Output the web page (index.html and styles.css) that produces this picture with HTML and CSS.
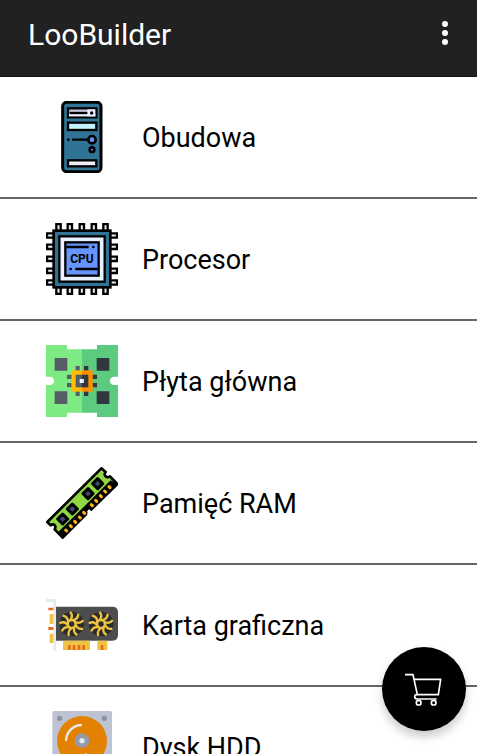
FILE: index.html
```html
<!DOCTYPE html>
<html lang="pl">
<head>
<meta charset="utf-8">
<meta name="viewport" content="width=device-width, initial-scale=1">
<title>LooBuilder</title>
<link rel="stylesheet" href="styles.css">
</head>
<body>
<div class="app">
  <header class="toolbar">
    <h1 class="toolbar-title">LooBuilder</h1>
    <button class="menu-button" type="button" aria-label="Menu">
      <svg class="menu-icon" viewBox="0 0 8 24" aria-hidden="true"><circle cx="4" cy="3" r="3"/><circle cx="4" cy="12" r="3"/><circle cx="4" cy="21" r="3"/></svg>
    </button>
  </header>
  <main class="content">
    <ul class="parts">
      <li class="part"><a class="part-link" href="#obudowa">
        <svg class="part-icon" viewBox="18 18 216 216" aria-hidden="true">
          <rect x="68" y="22" width="115" height="208" rx="12" fill="#2f7494" stroke="#000" stroke-width="9"/>
          <g stroke="#000" stroke-width="7">
            <rect x="84" y="40" width="85" height="27" fill="#c6c5dc"/>
            <path d="M87 57h79v7H87z" fill="#f2f1fa" stroke="none"/>
            <path d="M142 43h24v21h-24z" fill="#e8f0ff" stroke="none"/>
            <path d="M89 54h53" fill="none"/>
            <rect x="84" y="83" width="85" height="22" fill="#c4f2fc"/>
            <rect x="84" y="196" width="85" height="18" fill="#f0eef9"/>
            <path d="M99 134h46" stroke-linecap="round"/>
            <circle cx="156" cy="134" r="11" fill="#6695ff" stroke-width="8"/>
            <circle cx="156" cy="164" r="7" fill="#6695ff" stroke-width="8"/>
          </g>
          <circle cx="155" cy="54" r="5"/><circle cx="85" cy="134" r="4"/>
        </svg>
        <span class="part-name">Obudowa</span></a></li>
      <li class="part"><a class="part-link" href="#procesor">
        <svg class="part-icon" viewBox="18 18 216 216" aria-hidden="true">
          <g fill="#e3f1fb" stroke="#000" stroke-width="7">
            <path d="M49 42V21h13v21M83 42V21h13v21M119 42V21h13v21M155 42V21h13v21M190 42V21h13v21"/>
            <path d="M49 210v21h13v-21M83 210v21h13v-21M119 210v21h13v-21M155 210v21h13v-21M190 210v21h13v-21"/>
            <path d="M42 49H21v13h21M42 83H21v13h21M42 119H21v13h21M42 155H21v13h21M42 190H21v13h21"/>
            <path d="M210 49h21v13h-21M210 83h21v13h-21M210 119h21v13h-21M210 155h21v13h-21M210 190h21v13h-21"/>
          </g>
          <rect x="41" y="41" width="170" height="170" fill="#2f7494" stroke="#000" stroke-width="8"/>
          <rect x="58" y="58" width="136" height="136" fill="#e6f2ff" stroke="#000" stroke-width="7"/>
          <rect x="76" y="76" width="100" height="100" fill="#6695ff" stroke="#000" stroke-width="7"/>
          <path d="M79 90h67M106 156h67" stroke="#000" stroke-width="7"/>
          <circle cx="160" cy="90" r="4"/><circle cx="92" cy="156" r="4"/>
          <text class="cpu-text" x="126" y="139" text-anchor="middle">CPU</text>
        </svg>
        <span class="part-name">Procesor</span></a></li>
      <li class="part"><a class="part-link" href="#plyta">
        <svg class="part-icon" viewBox="18 18 216 216" aria-hidden="true">
          <path d="M18 18h63v13h45v190H81v13H18v-96h12a12 12 0 0 0 0-25H18z" fill="#7eea83"/>
          <path d="M234 18h-63v13h-45v190h45v13h63v-96h-12a12 12 0 0 1 0-25h12z" fill="#5ccb80"/>
          <path d="M44 57h38v38H44zM44 157h38v38H44zM107 81h12v90h-12zM81 107h14v13H81zM81 132h14v13H81z" fill="#575c66"/>
          <path d="M170 57h38v38h-38zM170 157h38v38h-38zM132 81h13v90h-13zM157 107h14v13h-14zM157 132h14v13h-14z" fill="#32363f"/>
          <path d="M95 94h31v64H95z" fill="#ffbf00"/><path d="M126 94h32v64h-32z" fill="#ff9100"/>
          <path d="M107 107h19v38h-19z" fill="#575c66"/><path d="M126 107h19v38h-19z" fill="#32363f"/>
          <path d="M119 120h7v12h-7z" fill="#f2fcff"/><path d="M126 120h6v12h-6z" fill="#cfe4ff"/>
        </svg>
        <span class="part-name">Płyta główna</span></a></li>
      <li class="part"><a class="part-link" href="#ram">
        <svg class="part-icon" viewBox="18 18 216 216" aria-hidden="true">
          <path d="M184 22L22 183l10 10c10-7 18 2 12 12l24 25 70-70c-2-8 6-15 14-13l80-78-22-23c-10 6-21-3-13-13z" fill="#91d645" stroke="#000" stroke-width="8" stroke-linejoin="round"/>
          <path d="M54 214L212 58l20 12-80 78c-8-2-16 5-14 13l-70 70z" fill="#000"/>
          <path d="M141 151l6-6 10 8-8 8z" fill="#fff"/>
          <g fill="#3d4c70" stroke="#000" stroke-width="9" stroke-linejoin="round">
            <path d="M68 159l15 15-15 15-15-15zM97 129l15 15-15 15-15-15zM144 83l15 15-15 15-15-15zM173 53l15 15-15 15-15-15z"/>
          </g>
          <g stroke="#ffb31a" stroke-width="9" stroke-linecap="round">
            <path d="M77 207l3 3M91 194l3 3M104 181l3 3M118 168l3 3M131 154l3 3M154 131l3 3M167 118l3 3M181 104l3 3M194 90l3 3M207 77l3 3"/>
          </g>
        </svg>
        <span class="part-name">Pamięć RAM</span></a></li>
      <li class="part"><a class="part-link" href="#karta">
        <svg class="part-icon" viewBox="18 18 216 216" aria-hidden="true">
          <defs>
            <g id="fan">
              <circle r="37" fill="#292d2c"/>
              <g fill="none" stroke="#f0c443" stroke-width="7">
                <path id="blade" d="M-2-11Q20-12 20-31"/>
                <use href="#blade" transform="rotate(40)"/><use href="#blade" transform="rotate(80)"/>
                <use href="#blade" transform="rotate(120)"/><use href="#blade" transform="rotate(160)"/>
                <use href="#blade" transform="rotate(200)"/><use href="#blade" transform="rotate(240)"/>
                <use href="#blade" transform="rotate(280)"/><use href="#blade" transform="rotate(320)"/>
                <circle r="12" stroke-width="5"/>
              </g>
            </g>
          </defs>
          <path d="M47 71h170q17 0 17 17v68q0 17-17 17H47z" fill="#4d4d4d"/>
          <path d="M18 48h26q4 0 4 5v145q0 5-4 5t-4-5V57H18z" fill="#e5ebeb"/>
          <path d="M29 93h11v30H29zM29 152h11v28H29zM69 173h81v28H69zM172 173h30v28h-30z" fill="#f0c443"/>
          <path d="M25 74h15v8H25zM25 132h15v9H25zM84 186h8v15h-8zM98 186h8v15h-8zM113 186h8v15h-8zM127 186h8v15h-8zM182 186h8v15h-8z" fill="#e36c21"/>
          <use href="#fan" x="95" y="123"/><use href="#fan" x="183" y="123"/>
        </svg>
        <span class="part-name">Karta graficzna</span></a></li>
      <li class="part"><a class="part-link" href="#dysk">
        <svg class="part-icon" viewBox="18 33 216 216" aria-hidden="true">
          <rect x="37" y="33" width="179" height="216" rx="5" fill="#bdc3d3"/>
          <circle cx="59" cy="55" r="8" fill="#8d92a1"/><circle cx="193" cy="55" r="8" fill="#8d92a1"/>
          <circle cx="59" cy="227" r="8" fill="#8d92a1"/><circle cx="193" cy="227" r="8" fill="#8d92a1"/>
          <circle cx="126" cy="123" r="75" fill="#e38200"/>
          <path d="M78 123a48 48 0 0 1 48-48" fill="none" stroke="#e8e8e8" stroke-width="7"/>
          <circle cx="126" cy="122" r="22" fill="#9599a8"/><circle cx="126" cy="122" r="8" fill="#e6e9ed"/>
          <path d="M138 159l8 45 15 10" fill="none" stroke="#bdc3d3" stroke-width="6"/>
        </svg>
        <span class="part-name">Dysk HDD</span></a></li>
    </ul>
  </main>
  <button class="cart-button" type="button" aria-label="Koszyk">
    <svg class="cart-icon" viewBox="36 21 252 252" aria-hidden="true">
      <path d="M105 104h24l13 60h63l7-46h-80M142 164q-8 0-8 6t7 7h59" fill="none" stroke="#fff" stroke-width="5" stroke-linejoin="round"/>
      <circle cx="146" cy="188" r="7" fill="none" stroke="#fff" stroke-width="5"/>
      <circle cx="191" cy="188" r="7" fill="none" stroke="#fff" stroke-width="5"/>
    </svg>
  </button>
</div>
</body>
</html>
```
FILE: styles.css
```css
* {
  box-sizing: border-box;
}

body {
  margin: 0;
  background: #fff;
  color: #000;
  font-family: Roboto, "Noto Sans", sans-serif;
}

.app {
  display: flex;
  flex-direction: column;
  height: 100vh;
}

.toolbar {
  display: flex;
  flex-shrink: 0;
  align-items: center;
  justify-content: space-between;
  padding: 11px 24px 21px 28px;
  background: #212121;
  border-bottom: 1px solid #151515;
}

.toolbar-title {
  margin: 0;
  padding-top: 4px;
  color: #fff;
  font-size: 30px;
  font-weight: 400;
  line-height: 40px;
}

.menu-button {
  display: flex;
  padding: 4px;
  border: 0;
  background: none;
  cursor: pointer;
}

.menu-icon {
  width: 8px;
  height: 24px;
  fill: #fff;
}

.content {
  flex: 1;
  min-height: 0;
  overflow-y: auto;
  scrollbar-width: none;
}

.parts {
  margin: 0;
  padding: 0;
  list-style: none;
}

.part + .part {
  border-top: 2px solid #666;
}

.part-link {
  display: flex;
  align-items: center;
  gap: 24px;
  padding: 24px 46px;
  color: inherit;
  text-decoration: none;
}

.part-icon {
  flex-shrink: 0;
  width: 72px;
  height: 72px;
}

.part-name {
  padding-top: 2px;
  font-size: 27px;
  line-height: 32px;
}

.cpu-text {
  font-size: 36px;
  font-weight: 700;
}

.cart-button {
  position: fixed;
  right: 11px;
  bottom: 23px;
  width: 84px;
  height: 84px;
  padding: 0;
  border: 0;
  border-radius: 50%;
  background: #000;
  box-shadow: 0 6px 10px rgba(0, 0, 0, 0.2);
  cursor: pointer;
}

.cart-icon {
  display: block;
  width: 100%;
  height: 100%;
}
```
